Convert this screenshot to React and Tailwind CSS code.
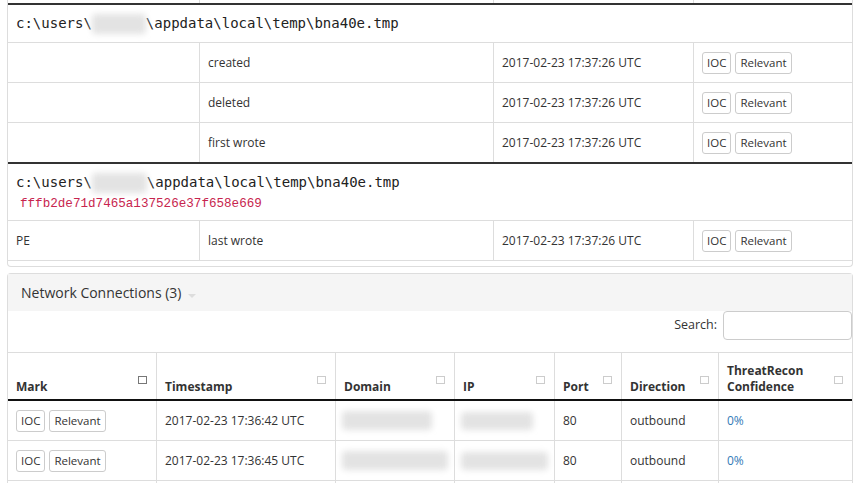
import React from "react";

const topCols = "grid grid-cols-[192px_294px_200px_1fr]";
const netCols = "grid grid-cols-[149px_179px_119px_100px_67px_97px_1fr]";

function Blur({ w, h = 20 }) {
    return (
        <span
            className="inline-block align-middle bg-[#e3e3e3] blur-[3px] rounded-sm"
            style={{ width: w, height: h }}
        />
    );
}

function MarkButtons() {
    return (
        <div className="flex gap-[4px]">
            <button className="h-[22px] px-[4px] border border-[#ccc] rounded-[3px] bg-white text-[11.5px] leading-[20px] text-[#333]">
                IOC
            </button>
            <button className="h-[22px] px-[4px] border border-[#ccc] rounded-[3px] bg-white text-[11.5px] leading-[20px] text-[#333]">
                Relevant
            </button>
        </div>
    );
}

function FileRow({ type, action, time }) {
    return (
        <div className={`${topCols} h-[40px] border-t border-[#ddd]`}>
            <div className="px-2 flex items-center border-r border-[#ddd]">{type}</div>
            <div className="px-2 flex items-center border-r border-[#ddd]">{action}</div>
            <div className="px-2 flex items-center border-r border-[#ddd]">{time}</div>
            <div className="px-2 flex items-center">
                <MarkButtons />
            </div>
        </div>
    );
}

function SortIcon({ dark }) {
    return (
        <span
            className={`absolute right-[9px] top-[23px] w-[9px] h-[8px] border bg-white ${dark ? "border-[#777]" : "border-[#ccc]"}`}
        />
    );
}

function Th({ children, dark, last }) {
    return (
        <div
            className={`relative flex items-end px-2 pb-[4px] font-bold leading-[16px] ${last ? "" : "border-r border-[#ddd]"}`}
        >
            <span>{children}</span>
            <SortIcon dark={dark} />
        </div>
    );
}

const connections = [
    { time: "2017-02-23 17:36:42 UTC", domain: 90, ip: 72 },
    { time: "2017-02-23 17:36:45 UTC", domain: 110, ip: 88 },
];

export default function App() {
    const mono = "font-['DejaVu_Sans_Mono',monospace]";
    return (
        <div className="bg-white w-[857px] h-[483px] overflow-hidden font-['Open_Sans',sans-serif] text-[12px] text-[#333]">
            <div className="ml-[7px] w-[846px]">
                {/* file events panel */}
                <div className="border-x border-b border-[#ddd] rounded-b-[4px] pb-[5px]">
                    <div className={`${topCols} h-[3px]`}>
                        <div className="border-r border-[#ddd]" />
                        <div className="border-r border-[#ddd]" />
                        <div className="border-r border-[#ddd]" />
                        <div />
                    </div>
                    <div className="h-[2px] bg-[#333]" />
                    <div className={`h-[37px] px-2 flex items-center ${mono} text-[14px] text-[#222]`}>
                        c:\users\<Blur w={54} />\appdata\local\temp\bna40e.tmp
                    </div>
                    <FileRow action="created" time="2017-02-23 17:37:26 UTC" />
                    <FileRow action="deleted" time="2017-02-23 17:37:26 UTC" />
                    <FileRow action="first wrote" time="2017-02-23 17:37:26 UTC" />
                    <div className="h-[2px] bg-[#333]" />
                    <div className={`h-[56px] px-2 pt-[8px] ${mono}`}>
                        <div className="text-[14px] leading-[20px] text-[#222]">
                            c:\users\<Blur w={55} />\appdata\local\temp\bna40e.tmp
                        </div>
                        <div className="leading-[20px]">
                            <code className="px-[4px] text-[12.6px] text-[#c7254e]">
                                fffb2de71d7465a137526e37f658e669
                            </code>
                        </div>
                    </div>
                    <div className="border-b border-[#ddd]">
                        <FileRow type="PE" action="last wrote" time="2017-02-23 17:37:26 UTC" />
                    </div>
                </div>

                {/* network connections panel */}
                <div className="mt-[6px] border-x border-t border-[#ddd] rounded-t-[4px]">
                    <div className="h-[37px] bg-[#f5f5f5] px-[13px] flex items-center text-[14px] text-[#333]">
                        Network Connections (3)
                        <span className="ml-[7px] mt-[6px] w-0 h-0 border-l-[4px] border-r-[4px] border-t-[4px] border-l-transparent border-r-transparent border-t-[#ddd]" />
                    </div>
                    <div className="flex justify-end items-center gap-[6px] h-[29px]">
                        <span className="text-[12.5px]">Search:</span>
                        <input className="w-[129px] h-[29px] border border-[#ccc] rounded-[4px] bg-white outline-none" />
                    </div>
                    <div className="mt-[12px] border-t border-[#ddd]">
                        <div className={`${netCols} h-[46px]`}>
                            <Th dark>Mark</Th>
                            <Th>Timestamp</Th>
                            <Th>Domain</Th>
                            <Th>IP</Th>
                            <Th>Port</Th>
                            <Th>Direction</Th>
                            <Th last>
                                ThreatRecon
                                <br />
                                Confidence
                            </Th>
                        </div>
                        <div className="h-[2px] bg-[#111]" />
                        {connections.map((c, i) => (
                            <div key={i} className={`${netCols} h-[40px] border-b border-[#ddd]`}>
                                <div className="px-2 flex items-center border-r border-[#ddd]">
                                    <MarkButtons />
                                </div>
                                <div className="px-2 flex items-center border-r border-[#ddd]">{c.time}</div>
                                <div className="px-[6px] flex items-center border-r border-[#ddd]">
                                    <Blur w={c.domain} h={19} />
                                </div>
                                <div className="px-[6px] flex items-center border-r border-[#ddd]">
                                    <Blur w={c.ip} h={18} />
                                </div>
                                <div className="px-2 flex items-center border-r border-[#ddd]">80</div>
                                <div className="px-2 flex items-center border-r border-[#ddd]">outbound</div>
                                <div className="px-2 flex items-center text-[#337ab7]">0%</div>
                            </div>
                        ))}
                        {/* next row, below the fold */}
                        <div className={`${netCols} h-[40px]`}>
                            <div className="border-r border-[#ddd]" />
                            <div className="border-r border-[#ddd]" />
                            <div className="border-r border-[#ddd]" />
                            <div className="border-r border-[#ddd]" />
                            <div className="border-r border-[#ddd]" />
                            <div className="border-r border-[#ddd]" />
                            <div />
                        </div>
                    </div>
                </div>
            </div>
        </div>
    );
}
